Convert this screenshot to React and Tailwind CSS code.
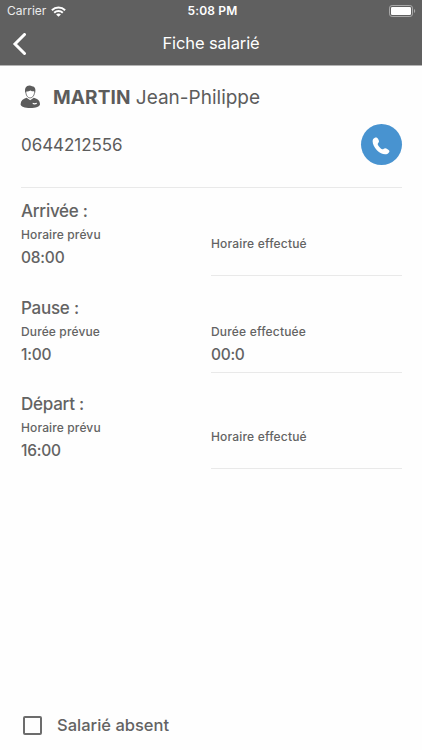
import React, { useState } from 'react';

const sections = [
  { title: 'Arrivée :', label: 'Horaire prévu', value: '08:00', doneLabel: 'Horaire effectué', doneValue: '' },
  { title: 'Pause :', label: 'Durée prévue', value: '1:00', doneLabel: 'Durée effectuée', doneValue: '00:0' },
  { title: 'Départ :', label: 'Horaire prévu', value: '16:00', doneLabel: 'Horaire effectué', doneValue: '' },
];

const WifiIcon = () => (
  <svg className="w-[15px] h-[11px]" viewBox="0 0 15 11" fill="none" stroke="white" strokeWidth="2">
    <path d="M0.9 4.2C4.6 0.6 10.4 0.6 14.1 4.2" />
    <path d="M3.2 6.8C5.6 4.5 9.4 4.5 11.8 6.8" />
    <path d="M7.5 10.8L5.1 8.5C6.5 7.3 8.5 7.3 9.9 8.5Z" fill="white" stroke="none" />
  </svg>
);

const BatteryIcon = () => (
  <svg className="w-[27px] h-[12px]" viewBox="0 0 27 12">
    <rect x="0.5" y="0.5" width="23" height="11" rx="2.6" fill="none" stroke="#a9a9a9" />
    <rect x="2" y="2" width="20" height="8" rx="1.2" fill="white" />
    <path d="M25 4v4c1.6-0.5 1.6-3.5 0-4z" fill="#a9a9a9" />
  </svg>
);

const PersonIcon = () => (
  <svg className="w-[20px] h-[24px]" viewBox="0 0 20 24">
    <path
      d="M5.9 6.3C5.6 10 7.6 12.9 10.1 12.9S14.8 10 14.5 6.3"
      fill="white"
      stroke="#5c5c5c"
      strokeWidth="0.8"
    />
    <path
      d="M5.3 8C4.4 3.4 6 0.6 9.5 0.6C10.5 0.6 11.4 0.8 12 1.3C15 1.4 16 4.2 15.1 8L14.2 6.3C13 6.5 11.6 6.2 10.5 5.5C9 6.3 7.3 6.7 6.2 6.4Z"
      fill="#5c5c5c"
    />
    <path
      d="M6.6 12.8L10.2 15.2L13.8 12.8C17.6 13.8 19.9 15.6 20 19.2C20 21.6 15.8 22.9 10.3 22.9S0.5 21.6 0.6 19.2C0.8 15.6 3 13.8 6.6 12.8Z"
      fill="#5c5c5c"
    />
    <path d="M12.8 17.8l1.7 0.5l2.3-0.6v1.2l-2.3 0.7l-1.9-0.6z" fill="white" />
  </svg>
);

const PhoneIcon = () => (
  <svg className="w-[18px] h-[18px]" viewBox="0 0 18 18" fill="white">
    <path d="M1.2 2C2.1 0.9 3.9 0 5 0.8C6.1 1.6 7 3.3 7 4.6C7 5.8 5.6 6.2 5.7 7.3C5.9 8.8 8.6 11.8 10.2 12.2C11.4 12.5 12 11.1 13.2 11.2C14.5 11.3 16.8 12.7 17.3 13.7C17.8 14.9 16.4 16.3 15.2 16.9C12.4 18.2 8.2 16.5 4.9 13.2C1.5 9.8 -0.4 4.4 1.2 2Z" />
  </svg>
);

const Section = ({ title, label, value, doneLabel, doneValue }) => (
  <div className="h-[96.7px] flex text-[#636363] font-medium">
    <div className="w-[190px]">
      <h2 className="mt-[12px] h-[22px] leading-[22px] text-[17px] tracking-[-0.25px]">{title}</h2>
      <div className="mt-[5px] h-4 leading-4 text-[12px] tracking-[0.13px]">{label}</div>
      <div className="mt-[5px] h-5 leading-5 text-[15.5px] tracking-[-0.2px]">{value}</div>
    </div>
    <div
      className={`w-[191px] h-[88px] border-b border-[#e9e9e9] ${doneValue ? 'pt-[39px]' : 'pt-[48px]'}`}
    >
      <div className="h-4 leading-4 text-[12px] tracking-[0.18px]">{doneLabel}</div>
      {doneValue && <div className="mt-[5px] h-5 leading-5 text-[15.5px] tracking-[-0.3px]">{doneValue}</div>}
    </div>
  </div>
);

const App = () => {
  const [absent, setAbsent] = useState(false);

  return (
    <div className="w-full h-[750px] flex flex-col bg-[#fefefe] text-[#5c5c5c] font-['Inter',sans-serif] overflow-hidden">
      <header className="h-[66px] bg-[#606060] text-white border-b border-[#b4b4b4]">
        {/* Status bar */}
        <div className="h-[22px] grid grid-cols-3 items-center pl-[7px] pr-[6px] text-[12px] leading-none">
          <div className="flex items-center gap-[5px]">
            <span className="text-[#ececec]">Carrier</span>
            <WifiIcon />
          </div>
          <span className="pl-[2px] text-center font-semibold tracking-[0.15px]">5:08 PM</span>
          <div className="flex justify-end">
            <BatteryIcon />
          </div>
        </div>

        <div className="h-[43px] grid grid-cols-[60px_1fr_60px] items-center">
          <button className="pl-[12px]">
            <svg className="w-[15px] h-[22px]" viewBox="0 0 15 22" fill="none" stroke="white" strokeWidth="3">
              <path d="M12.5 1.5L3 11L12.5 20.5" strokeLinecap="round" />
            </svg>
          </button>
          <h1 className="text-center text-[16.5px] tracking-[-0.1px]">Fiche salarié</h1>
        </div>
      </header>

      <main className="pl-[21px] pr-[20px] flex-1">
        <div className="h-[62px] flex items-center gap-[13px] -ml-px">
          <PersonIcon />
          <div className="mt-[2px] text-[19px] leading-6 whitespace-nowrap">
            <span className="font-bold tracking-[0.1px]">MARTIN</span> Jean-Philippe
          </div>
        </div>

        <div className="h-[60px] flex justify-between border-b border-[#e9e9e9]">
          <span className="mt-[5px] leading-6 text-[17px] tracking-[-0.05px]">0644212556</span>
          <button className="-mt-[4px] w-[41px] h-[41px] pr-[1px] pt-[2px] rounded-full bg-[#4893d0] flex items-center justify-center">
            <PhoneIcon />
          </button>
        </div>

        {sections.map((section) => (
          <Section key={section.title} {...section} />
        ))}
      </main>

      <label className="h-[50px] pl-[23px] flex items-center gap-[15px]">
        <input
          type="checkbox"
          checked={absent}
          onChange={(e) => setAbsent(e.target.checked)}
          className="appearance-none w-[19px] h-[19px] border-2 border-[#6c6c6c] rounded-[2px] checked:bg-[#6c6c6c]"
        />
        <span className="text-[16.5px] font-medium text-[#636363]">Salarié absent</span>
      </label>
    </div>
  );
};

export default App;
